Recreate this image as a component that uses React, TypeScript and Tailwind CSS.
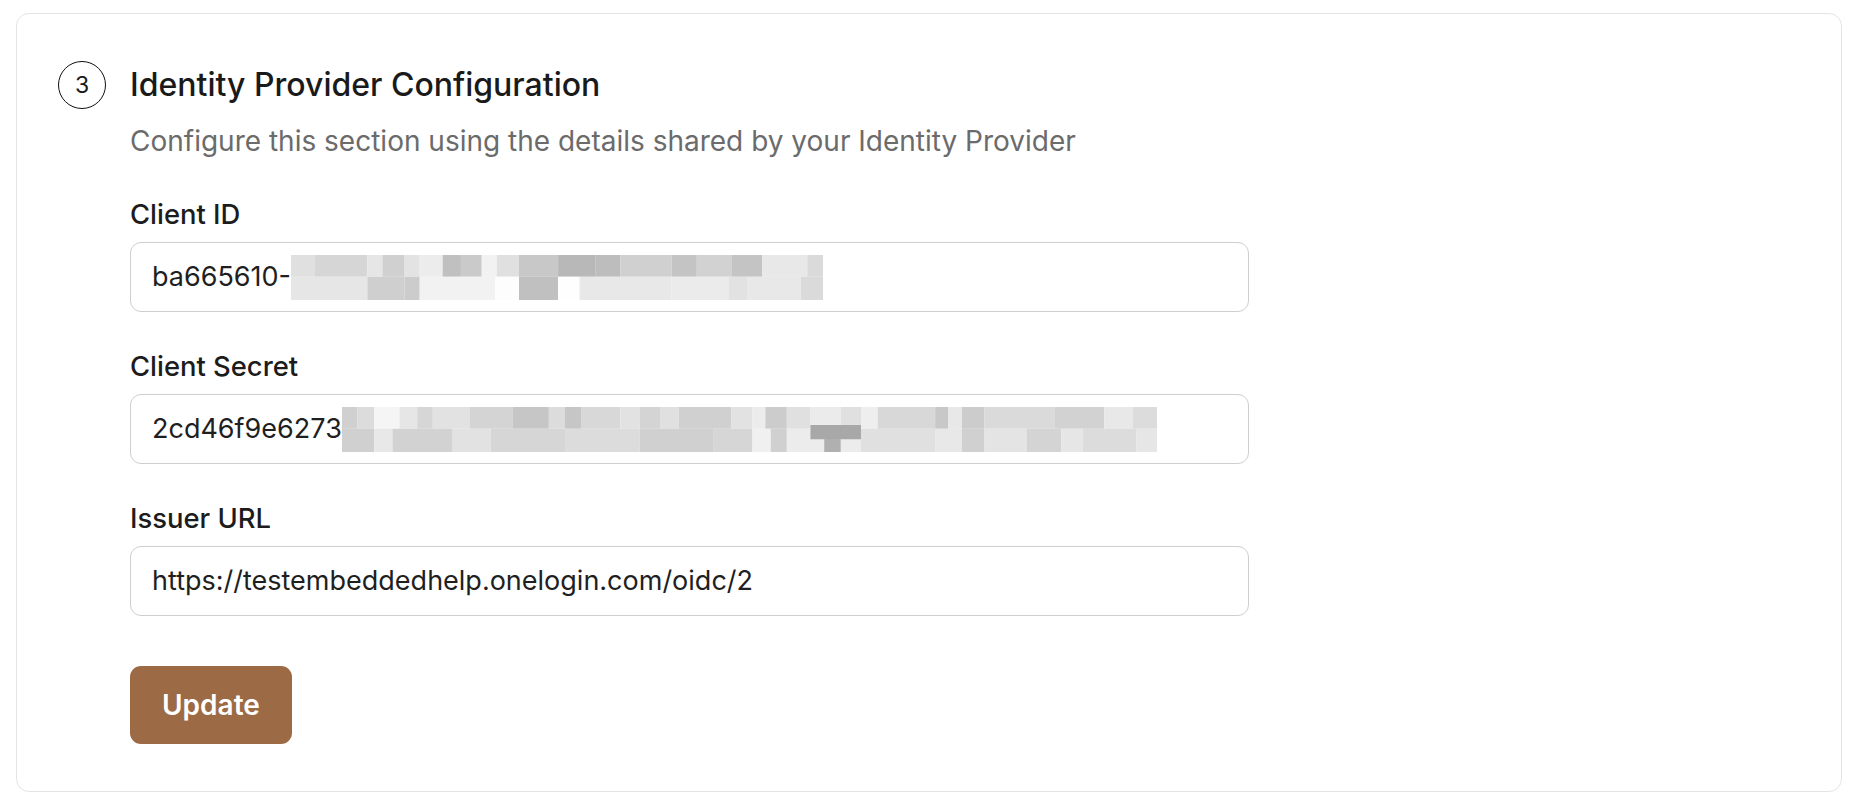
import React from 'react';

type Seg = [number, number, string];

// pixelated redaction blocks, in a 0..1500 x 0..120 box
const clientIdTop: Seg[] = [
  [50, 115, '#e0e0e0'], [115, 263, '#d6d6d6'], [263, 305, '#e6e6e6'], [305, 367, '#d0d0d0'],
  [367, 407, '#e3e3e3'], [407, 473, '#ececec'], [473, 524, '#c0c0c0'], [524, 582, '#cacaca'],
  [582, 624, '#f2f2f2'], [624, 686, '#e0e0e0'], [686, 795, '#c8c8c8'], [795, 900, '#b8b8b8'],
  [900, 969, '#bdbdbd'], [969, 1112, '#d0d0d0'], [1112, 1182, '#c4c4c4'], [1182, 1280, '#d2d2d2'],
  [1280, 1364, '#c4c4c4'], [1364, 1490, '#e8e8e8'], [1490, 1534, '#dadada'],
];
const clientIdBottom: Seg[] = [
  [50, 263, '#e6e6e6'], [263, 367, '#cfcfcf'], [367, 409, '#cccccc'], [409, 620, '#f2f2f2'],
  [620, 686, '#fdfdfd'], [686, 795, '#c0c0c0'], [795, 855, '#fefefe'], [855, 1112, '#e8e8e8'],
  [1112, 1270, '#ebebeb'], [1270, 1322, '#e2e2e2'], [1322, 1472, '#e8e8e8'], [1472, 1534, '#dadada'],
];
const secretTop: Seg[] = [
  [18, 47, '#d0d0d0'], [47, 78, '#dcdcdc'], [78, 125, '#f5f5f5'], [125, 158, '#e6e6e6'],
  [158, 187, '#d6d6d6'], [187, 256, '#e2e2e2'], [256, 336, '#d4d4d4'], [336, 403, '#c6c6c6'],
  [403, 433, '#dcdcdc'], [433, 463, '#c6c6c6'], [463, 536, '#d8d8d8'], [536, 572, '#e2e2e2'],
  [572, 610, '#d4d4d4'], [610, 645, '#e0e0e0'], [645, 743, '#d0d0d0'], [743, 782, '#e2e2e2'],
  [782, 806, '#ececec'], [806, 846, '#cccccc'], [846, 890, '#e0e0e0'], [890, 946, '#ebebeb'],
  [946, 984, '#e0e0e0'], [984, 1015, '#eeeeee'], [1015, 1122, '#d8d8d8'], [1122, 1146, '#c8c8c8'],
  [1146, 1172, '#e8e8e8'], [1172, 1214, '#cccccc'], [1214, 1345, '#dadada'], [1345, 1437, '#d2d2d2'],
  [1437, 1490, '#e8e8e8'], [1490, 1535, '#dcdcdc'],
];
const secretBottom: Seg[] = [
  [18, 78, '#d0d0d0'], [78, 112, '#e8e8e8'], [112, 224, '#d2d2d2'], [224, 295, '#e2e2e2'],
  [295, 433, '#d6d6d6'], [433, 572, '#dcdcdc'], [572, 710, '#d0d0d0'], [710, 782, '#d6d6d6'],
  [782, 816, '#f0f0f0'], [816, 846, '#d0d0d0'], [846, 916, '#ececec'], [916, 946, '#b0b0b0'],
  [946, 984, '#ececec'], [984, 1122, '#e0e0e0'], [1122, 1172, '#e8e8e8'], [1172, 1214, '#d0d0d0'],
  [1214, 1292, '#e4e4e4'], [1292, 1357, '#d4d4d4'], [1357, 1397, '#e6e6e6'], [1397, 1497, '#dcdcdc'],
  [1497, 1535, '#e6e6e6'],
];

function Redaction({ top, bottom, width, extra }: { top: Seg[]; bottom: Seg[]; width: number; extra?: boolean }) {
  const x0 = top[0][0];
  const x1 = top[top.length - 1][1];
  return (
    <svg
      width={width}
      height={45}
      viewBox={`${x0} 0 ${x1 - x0} 120`}
      preserveAspectRatio="none"
      className="block shrink-0"
    >
      {top.map(([a, b, c], i) => (
        <rect key={`t${i}`} x={a} y={0} width={b - a} height={58} fill={c} />
      ))}
      {bottom.map(([a, b, c], i) => (
        <rect key={`b${i}`} x={a} y={58} width={b - a} height={62} fill={c} />
      ))}
      {extra && <rect x={890} y={48} width={94} height={38} fill="#a8a8a8" />}
      {extra && <rect x={916} y={86} width={30} height={34} fill="#b0b0b0" />}
    </svg>
  );
}

function Field({ label, children }: { label: string; children: React.ReactNode }) {
  return (
    <div className="flex flex-col">
      <label className="text-[27.4px] leading-[38px] font-medium text-[#1c1c1c] mb-[9px]">{label}</label>
      <div className="h-[70px] w-[1119px] rounded-[11px] border-[1.5px] border-[#cfcfcf] bg-white pl-[21px] flex items-center text-[27px] text-[#1f1f1f]">
        {children}
      </div>
    </div>
  );
}

export default function App() {
  return (
    <div className="min-h-[808px] bg-white pt-[13px] pl-[16px] pr-[18px]" style={{ fontFamily: 'Inter, "Noto Sans", sans-serif' }}>
      <div className="h-[779px] rounded-[13px] border-[1.5px] border-[#e4e4e4] bg-white pt-[47px] pl-[41px]">
        {/* Header */}
        <div className="flex items-center gap-[24px] h-[48px]">
          <div className="w-[48px] h-[48px] rounded-full border-[1.5px] border-[#111] flex items-center justify-center text-[23px] text-[#1a1a1a]">
            3
          </div>
          <h2 className="text-[32px] leading-[40px] font-medium text-[#1a1a1a]">Identity Provider Configuration</h2>
        </div>

        <div className="pl-[72px]">
          <p className="mt-[13px] text-[28px] leading-[38px] text-[#6b6b6b]">
            Configure this section using the details shared by your Identity Provider
          </p>

          <div className="mt-[35px] flex flex-col gap-[35px]">
            <Field label="Client ID">
              <span>ba665610-</span>
              <Redaction top={clientIdTop} bottom={clientIdBottom} width={532} />
            </Field>
            <Field label="Client Secret">
              <span>2cd46f9e6273</span>
              <Redaction top={secretTop} bottom={secretBottom} width={815} extra />
            </Field>
            <Field label="Issuer URL">
              <span>https://testembeddedhelp.onelogin.com/oidc/2</span>
            </Field>
          </div>

          <button className="mt-[50px] h-[78px] px-[32px] rounded-[11px] bg-[#9c6a45] text-white text-[28px] font-semibold">
            Update
          </button>
        </div>
      </div>
    </div>
  );
}
